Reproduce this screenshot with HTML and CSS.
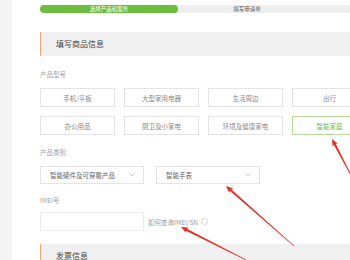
FILE: index.html
```html
<!DOCTYPE html>
<html lang="zh">
<head>
<meta charset="utf-8">
<link rel="stylesheet" href="styles.css">
</head>
<body>
<div class="page">
  <div class="card">
    <div class="steps">
      <div class="step active">选择产品和服务</div>
      <div class="step">填写申请单</div>
      <div class="step"></div>
    </div>
    <div class="section-title">填写商品信息</div>
    <div class="label first">产品型号</div>
    <div class="grid">
      <div class="opt">手机/平板</div>
      <div class="opt">大型家用电器</div>
      <div class="opt">生活周边</div>
      <div class="opt">出行</div>
      <div class="opt">办公用品</div>
      <div class="opt">厨卫及小家电</div>
      <div class="opt">环境及健康家电</div>
      <div class="opt on">智能家庭</div>
    </div>
    <div class="label">产品类别</div>
    <div class="selects">
      <div class="select"><span>智能硬件及可穿戴产品</span><svg class="chev" width="6" height="4" viewBox="0 0 6 4"><polyline points="0.5,0.5 3,3 5.5,0.5" fill="none" stroke="#bbb" stroke-width="0.8"/></svg></div>
      <div class="select"><span>智能手表</span><svg class="chev" width="6" height="4" viewBox="0 0 6 4"><polyline points="0.5,0.5 3,3 5.5,0.5" fill="none" stroke="#bbb" stroke-width="0.8"/></svg></div>
    </div>
    <div class="label imei">IMEI号</div>
    <div class="imei-row">
      <div class="input"></div>
      <span class="help">如何查询IMEI/SN</span>
      <span class="q"></span>
    </div>
    <div class="section-title second">发票信息</div>
  </div>
  <svg class="arrows" width="350" height="260" viewBox="0 0 350 260">
    <polygon fill="#e8302a" points="332,139 332.59,146.59 333.81,144.83 353.73,181.14 354.27,180.86 335.75,143.81 337.91,143.81"/>
    <polygon fill="#e8302a" points="226,186 229.26,192.88 229.77,190.80 293.8,246.23 294.2,245.77 231.23,189.14 233.24,188.38"/>
    <polygon fill="#e8302a" points="181,227 185.88,232.84 185.85,230.69 251.86,263.27 252.14,262.73 186.85,228.73 188.6,227.48"/>
  </svg>
</div>
</body>
</html>
```
FILE: styles.css
```css
html, body {
  margin: 0;
  padding: 0;
}
body {
  background: #f4f4f4;
  font-family: "Noto Sans CJK SC", "Noto Sans", sans-serif;
  width: 350px;
  height: 260px;
  overflow: hidden;
}
.page {
  position: relative;
  width: 350px;
  height: 260px;
  overflow: hidden;
}
.card {
  margin-left: 12px;
  background: #fff;
  padding: 5px 0 0 28px;
  height: 255px;
}
.steps {
  display: flex;
  width: 414px;
  height: 8px;
  background: #eeeeee;
  border-radius: 4px;
}
.step {
  width: 138px;
  flex: none;
  font-size: 5.5px;
  line-height: 8px;
  text-align: center;
  color: #555;
}
.step.active {
  background: #6cbd3e;
  color: #fff;
  border-radius: 4px;
}
.section-title {
  margin-top: 19px;
  width: 320px;
  height: 24px;
  background: #f0f0f0;
  border-left: 1px solid #f2a477;
  padding-left: 15px;
  font-size: 8px;
  line-height: 24px;
  color: #444;
}
.section-title.second {
  margin-top: 13px;
}
.label {
  font-size: 6.5px;
  line-height: 10px;
  color: #a3a3a3;
  margin-top: 12px;
}
.label.first {
  margin-top: 13px;
}
.label.imei {
  margin-top: 11px;
}
.grid {
  display: grid;
  grid-template-columns: repeat(4, 75px);
  column-gap: 9px;
  row-gap: 9px;
  margin-top: 9px;
  width: max-content;
}
.opt {
  height: 19px;
  box-sizing: border-box;
  border: 1px solid #e4e4e4;
  font-size: 6.5px;
  color: #888;
  display: flex;
  align-items: center;
  justify-content: center;
}
.opt.on {
  border-color: #b2dc98;
  color: #6cbd3e;
}
.selects {
  display: flex;
  gap: 12px;
  margin-top: 9px;
}
.select {
  width: 104px;
  height: 18px;
  box-sizing: border-box;
  border: 1px solid #e5e5e5;
  padding: 0 8px 0 9px;
  display: flex;
  align-items: center;
  justify-content: space-between;
  font-size: 6.5px;
  color: #666;
}
.imei-row {
  display: flex;
  align-items: center;
  margin-top: 7px;
}
.input {
  width: 104px;
  height: 19px;
  box-sizing: border-box;
  border: 1px solid #ececec;
}
.help {
  margin-left: 4px;
  font-size: 6.5px;
  color: #999;
}
.q {
  margin-left: 3px;
  width: 5px;
  height: 5px;
  border: 0.8px solid #d5d5d5;
  border-radius: 50%;
}
.arrows {
  position: absolute;
  left: 0;
  top: 0;
  pointer-events: none;
}
```
